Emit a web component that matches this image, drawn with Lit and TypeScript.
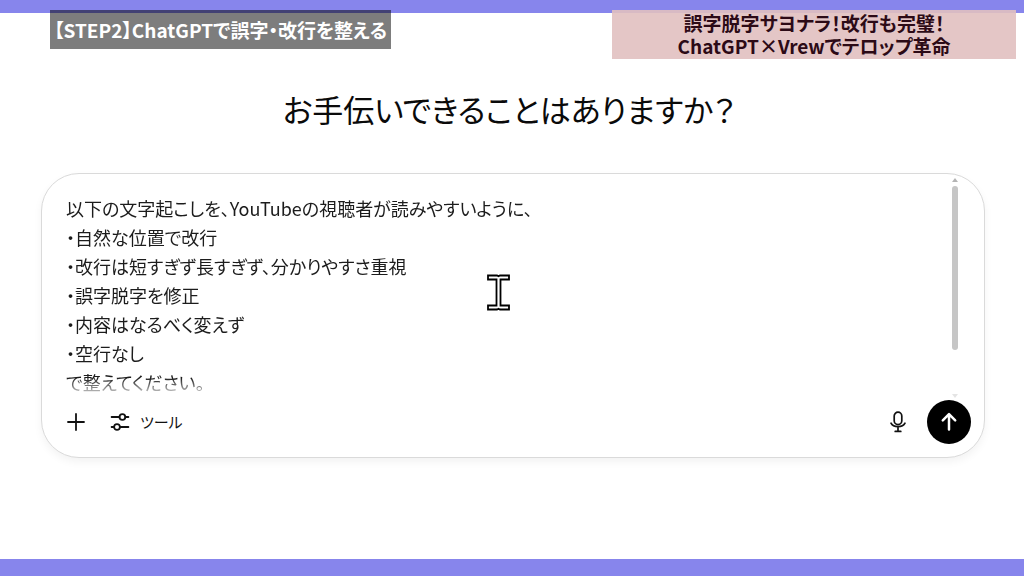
import { LitElement, html, css } from "lit";
import { customElement, state } from "lit/decorators.js";

const PROMPT = [
  "以下の文字起こしを、YouTubeの視聴者が読みやすいように、",
  "・自然な位置で改行",
  "・改行は短すぎず長すぎず、分かりやすさ重視",
  "・誤字脱字を修正",
  "・内容はなるべく変えず",
  "・空行なし",
  "で整えてください。",
].join("\n");

@customElement("prompt-box")
export class PromptBox extends LitElement {
  @state() private text = PROMPT;

  static styles = css`
    :host {
      display: block;
    }
    .card {
      border: 1px solid #dadada;
      border-radius: 38px;
      background: #fff;
      box-shadow: 0 4px 8px rgba(0, 0, 0, 0.05);
      padding: 4px 13px 11px 24px;
    }
    .editor {
      display: flex;
      height: 220px;
    }
    .text {
      flex: 1;
      min-width: 0;
      box-sizing: border-box;
      border: 0;
      margin: 0;
      padding: 16px 0 0;
      outline: 0;
      resize: none;
      overflow: hidden;
      background: none;
      color: #1c1c1c;
      font: inherit;
      font-size: 18px;
      line-height: 29px;
      font-feature-settings: inherit;
      white-space: pre-wrap;
      -webkit-mask-image: linear-gradient(#000 200px, transparent 100%);
      mask-image: linear-gradient(#000 200px, transparent 100%);
    }
    .scroll {
      display: flex;
      flex-direction: column;
      align-items: center;
      width: 8px;
      margin-right: 12px;
    }
    .arrow {
      width: 6px;
      height: 4px;
      flex: none;
      fill: #b4b4b4;
    }
    .thumb {
      width: 6px;
      height: 164px;
      margin: 4px 0 auto;
      border-radius: 3px;
      background: #c6c6c6;
    }
    .faint {
      fill: #e4e4e4;
    }
    .tools {
      display: flex;
      align-items: center;
      height: 48px;
    }
    button {
      display: flex;
      align-items: center;
      border: 0;
      margin: 0;
      padding: 0;
      background: none;
      color: #111;
      font: inherit;
      font-feature-settings: inherit;
      font-size: 15px;
      line-height: 24px;
    }
    .icon {
      display: block;
      fill: none;
      stroke: currentColor;
      stroke-linecap: round;
      stroke-linejoin: round;
    }
    .tool {
      gap: 10px;
      margin-left: 24px;
    }
    .mic {
      margin-left: auto;
      margin-right: 18px;
    }
    .send {
      justify-content: center;
      width: 44px;
      height: 44px;
      border-radius: 50%;
      background: #000;
      color: #fff;
    }
  `;

  private onInput(e: Event) {
    this.text = (e.target as HTMLTextAreaElement).value;
  }

  render() {
    return html`
      <form class="card" @submit=${(e: Event) => e.preventDefault()}>
        <div class="editor">
          <textarea
            class="text"
            aria-label="プロンプト"
            spellcheck="false"
            .value=${this.text}
            @input=${this.onInput}
          ></textarea>
          <div class="scroll" aria-hidden="true">
            <svg class="arrow" viewBox="0 0 6 4"><path d="M3 0 6 4H0z" /></svg>
            <div class="thumb"></div>
            <svg class="arrow faint" viewBox="0 0 6 4"><path d="M3 4 0 0H6z" /></svg>
          </div>
        </div>
        <div class="tools">
          <button type="button" aria-label="追加">
            <svg class="icon" width="20" height="20" viewBox="0 0 20 20" stroke-width="1.8">
              <path d="M10 2v16M2 10h16" />
            </svg>
          </button>
          <button type="button" class="tool">
            <svg class="icon" width="20" height="20" viewBox="0 0 20 20" stroke-width="1.8">
              <circle cx="12.4" cy="5" r="2.9" />
              <path d="M1.6 5h7.9M15.3 5h3.1" />
              <circle cx="7" cy="15" r="2.9" />
              <path d="M1.6 15h2.5M9.9 15h8.5" />
            </svg>
            ツール
          </button>
          <button type="button" class="mic" aria-label="音声入力">
            <svg class="icon" width="22" height="22" viewBox="0 0 22 22" stroke-width="1.7">
              <rect x="7.2" y="1.2" width="7.6" height="12.4" rx="3.8" />
              <path d="M4 12.2a7.4 5.2 0 0 0 14 0M11 16.2v4M8.2 20.4h5.6" />
            </svg>
          </button>
          <button type="submit" class="send" aria-label="送信">
            <svg class="icon" width="20" height="20" viewBox="0 0 20 20" stroke-width="2.5">
              <path d="M10 17.6V2.4M3.8 8.4 10 2.2l6.2 6.2" />
            </svg>
          </button>
        </div>
      </form>
    `;
  }
}

@customElement("app-root")
export class AppRoot extends LitElement {
  static styles = css`
    :host {
      display: flex;
      flex-direction: column;
      min-height: 100vh;
      background: #fff;
      font-family: "Noto Sans CJK JP", "Noto Sans", sans-serif;
      font-feature-settings: "palt";
    }
    .top {
      display: flex;
      justify-content: space-between;
      align-items: flex-start;
      height: 50px;
      padding: 10px 8px 0 50px;
      background: linear-gradient(#8785ec 13px, #fff 13px);
    }
    .tag {
      margin: 0;
      box-sizing: border-box;
      font-size: 19px;
      font-weight: 700;
      white-space: nowrap;
    }
    .step {
      padding: 0 4px;
      line-height: 39px;
      background: rgba(0, 0, 0, 0.51);
      color: #fff;
    }
    .topic {
      width: 404px;
      padding: 1px 0 2px;
      line-height: 23px;
      text-align: center;
      background: rgba(225, 192, 192, 0.9);
      color: #2c0a16;
    }
    .main {
      position: relative;
      flex: 1;
      padding: 24px 39px 0 41px;
    }
    .title {
      margin: 0 0 39px;
      padding-right: 8px;
      text-align: center;
      font-size: 31px;
      font-weight: 400;
      line-height: 50px;
      color: #0a0a0a;
    }
    .cursor {
      position: absolute;
      left: 487px;
      top: 214px;
      pointer-events: none;
    }
    .bottom {
      height: 17px;
      background: #8785ec;
    }
  `;

  render() {
    return html`
      <header class="top">
        <p class="tag step">【STEP2】ChatGPTで誤字・改行を整える</p>
        <p class="tag topic">誤字脱字サヨナラ！改行も完璧！<br />ChatGPT×Vrewでテロップ革命</p>
      </header>
      <main class="main">
        <h1 class="title">お手伝いできることはありますか？</h1>
        <prompt-box></prompt-box>
        <svg class="cursor" width="23" height="37" viewBox="0 0 23 37" aria-hidden="true">
          <path
            d="M1 1.5h9l1.5.8 1.5-.8h9v4h-8.5v26h8.5v4h-9l-1.5-.8-1.5.8h-9v-4h8.5v-26H1z"
            fill="#fff"
            stroke="#000"
            stroke-width="1.8"
          />
        </svg>
      </main>
      <footer class="bottom"></footer>
    `;
  }
}
